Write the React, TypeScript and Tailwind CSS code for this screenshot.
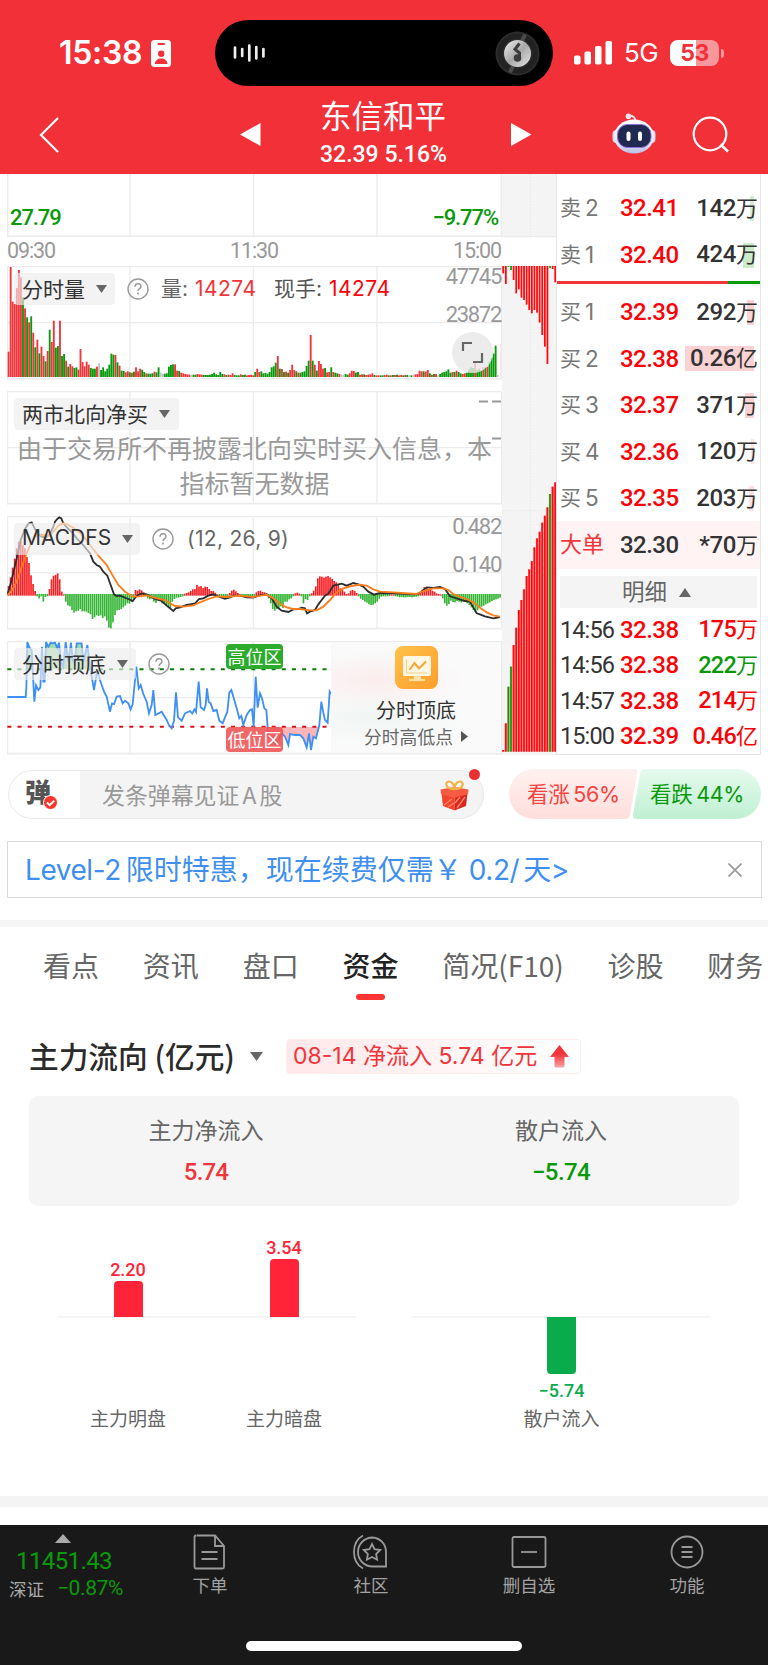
import type { ReactNode } from "react";
import clsx from "clsx";

interface Level {
  label: string;
  price: string;
  amount: string;
  depth?: string;
}

interface Tick {
  time: string;
  price: string;
  amount: string;
  up: boolean;
}

const SELLS: Level[] = [
  { label: "卖2", price: "32.41", amount: "142万", depth: "w-1 bg-[#d3efd3]" },
  { label: "卖1", price: "32.40", amount: "424万", depth: "w-[11px] bg-[#cbebcb]" },
];

const BUYS: Level[] = [
  { label: "买1", price: "32.39", amount: "292万", depth: "w-[7px] bg-[#fbd3d5]" },
  { label: "买2", price: "32.38", amount: "0.26亿", depth: "w-[69px] bg-[#fbd3d5]" },
  { label: "买3", price: "32.37", amount: "371万", depth: "w-[9px] bg-[#fbd3d5]" },
  { label: "买4", price: "32.36", amount: "120万", depth: "w-[3px] bg-[#fde3e4]" },
  { label: "买5", price: "32.35", amount: "203万", depth: "w-[5px] bg-[#fde0e1]" },
];

const TICKS: Tick[] = [
  { time: "14:56", price: "32.38", amount: "175万", up: true },
  { time: "14:56", price: "32.38", amount: "222万", up: false },
  { time: "14:57", price: "32.38", amount: "214万", up: true },
  { time: "15:00", price: "32.39", amount: "0.46亿", up: true },
];

const TABS = ["看点", "资讯", "盘口", "资金", "简况(F10)", "诊股", "财务"];

// one entry per minute: r = up, g = down, x = flat
const VOLUME =
  "r76 r330 r226 r219 r267 r321 r299 g239 r206 g179 r164 g182 r133 g89 r112 g71 r91 r63 g47 r78 g142 r105 r169 g88 g93 r169 g63 g69 r49 g31 r39 r32 g27 g29 r22 r84 r45 r32 r46 r37 g27 g25 g25 r31 x41 g21 g29 g17 g25 g37 g70 g67 r66 g44 r34 g19 g18 r14 r17 g14 r13 g16 r29 r17 r25 g22 g15 r11 g10 g10 g11 r16 g14 g29 x13 x10 g10 g11 g31 g36 g38 r38 r19 g18 r13 r11 r9 r8 r7 x7 g7 g7 r9 r8 r7 g6 g6 g6 g7 g9 g13 g8 g6 g15 g9 r8 g6 r7 r6 r11 g6 g5 g5 r8 g6 g7 r5 r6 r7 r5 g15 r25 r15 g17 g11 g12 g10 g15 g29 g32 g43 r63 g25 r24 g15 r16 g13 r21 r37 r21 g17 r13 g13 g15 g17 g33 g49 r126 g49 r37 g19 r48 r39 r25 g27 r14 r15 g29 r15 g13 g11 r9 x7 x7 g9 g7 r11 r19 r18 g13 g15 r7 r8 g8 r6 r7 r8 r11 g6 r5 r5 g5 g5 r6 r7 g5 r5 g6 r6 g7 r5 r6 g5 r6 g6 x5 g5 x7 r8 r9 r19 r17 g17 r16 r21 g11 r7 g9 r9 x5 g9 g13 g15 g17 g23 g13 r15 g15 r19 g15 g11 r9 r11 g13 g23 g29 g27 r44 g21 g25 g19 r29 g29 r31 g46 g57 g70 g94 x6 x0 r99";

// histogram edges, measured against a zero line at 630
const MACD_HIST = [
  603, 577, 548, 521, 490, 470, 468, 480, 490, 516, 534, 571, 597, 618, 634, 640, 634, 650, 636, 634, 612, 583, 572,
  570, 565, 583, 620, 628, 650, 661, 664, 675, 683, 679, 677, 672, 679, 679, 680, 684, 688, 702, 697, 691, 693, 691,
  699, 694, 707, 728, 730, 712, 690, 676, 675, 672, 667, 662, 655, 656, 650, 640, 615, 617, 613, 616, 622, 634, 640,
  643, 640, 650, 654, 645, 648, 655, 657, 660, 666, 670, 650, 642, 638, 638, 636, 634, 626, 624, 622, 618, 613, 612,
  600, 605, 603, 609, 605, 606, 612, 618, 618, 623, 628, 634, 637, 638, 640, 638, 624, 617, 614, 619, 624, 628, 634,
  634, 636, 636, 636, 635, 634, 622, 618, 617, 621, 622, 626, 640, 655, 672, 677, 672, 668, 664, 669, 650, 650, 643,
  640, 634, 625, 623, 626, 634, 655, 642, 645, 634, 625, 617, 604, 580, 574, 575, 578, 575, 573, 577, 582, 588, 592,
  600, 610, 613, 620, 627, 625, 617, 615, 618, 624, 634, 641, 645, 650, 653, 658, 660, 659, 655, 650, 641, 635, 634,
  634, 634, 633, 628, 628, 634, 635, 637, 636, 637, 637, 636, 636, 637, 636, 635, 634, 622, 614, 606, 610, 613, 612,
  617, 620, 625, 627, 628, 640, 655, 662, 657, 647, 651, 652, 648, 650, 652, 650, 650, 655, 660, 667, 675, 682, 676,
  668, 665, 662, 658, 655, 652, 648, 645, 643, 641, 638,
];

const DIF =
  "22,630 35,585 50,520 62,465 75,432 85,416 95,412 105,432 115,447 125,455 137,458 150,447 160,425 165,410 172,402 178,397 184,400 190,415 205,432 215,440 230,460 245,475 262,495 270,505 280,530 290,540 300,545 310,560 322,572 332,600 342,628 350,633 360,632 385,642 398,648 410,632 425,625 440,628 455,637 470,643 485,648 500,662 520,678 527,670 540,667 560,660 570,658 585,655 597,642 610,640 625,632 640,628 655,634 675,641 690,637 700,632 720,632 740,637 760,638 775,632 800,628 815,640 830,665 845,677 865,681 880,673 895,672 905,668 915,670 921,685 930,680 945,675 955,658 965,645 975,632 985,626 1000,602 1025,596 1040,602 1060,594 1075,598 1090,605 1105,620 1122,629 1140,624 1180,625 1250,628 1262,622 1280,607 1300,609 1320,606 1335,612 1350,634 1370,640 1395,648 1410,650 1420,668 1430,685 1440,688 1455,694 1480,700 1500,696";

const DEA =
  "22,630 35,618 50,590 65,545 80,505 95,470 110,450 125,449 145,452 160,440 175,422 190,415 205,420 220,428 245,448 270,480 295,512 320,540 340,575 355,600 375,620 400,635 420,634 440,631 460,637 480,642 495,645 510,655 525,663 550,665 580,661 600,652 625,642 650,634 680,636 720,632 760,636 800,629 820,640 840,657 860,667 880,672 900,672 930,676 950,676 970,665 990,645 1010,622 1030,610 1055,603 1080,599 1100,602 1120,613 1140,620 1180,622 1250,627 1270,618 1300,610 1330,610 1345,615 1360,627 1380,635 1400,642 1420,652 1440,668 1460,682 1480,691 1500,695";

const PEAKS =
  "22,201 77,201 79,175 82,36 88,52 95,60 103,215 108,166 115,180 121,172 126,50 130,155 134,155 138,36 145,50 152,38 158,40 165,38 172,55 177,38 183,95 190,110 197,36 205,95 213,38 218,90 224,100 230,40 245,40 250,95 262,45 272,120 282,180 292,120 300,150 305,165 312,185 320,200 330,245 336,220 342,222 350,200 360,198 368,220 375,212 385,220 392,238 398,222 409,110 416,175 422,165 430,192 440,215 447,250 455,225 460,180 466,255 485,245 500,270 508,288 515,295 522,272 528,187 534,262 545,272 555,250 570,243 577,250 583,238 588,246 596,155 602,232 612,240 617,225 621,175 626,215 632,220 640,243 650,240 658,272 668,280 675,262 682,245 688,188 694,180 700,200 710,235 718,265 724,258 730,285 740,255 750,240 756,238 761,290 767,140 773,233 780,190 786,205 793,235 799,240 805,320 815,325 825,343 835,330 845,310 855,320 865,345 870,312 885,315 900,315 910,325 920,352 927,310 933,360 940,320 948,325 958,285 964,215 970,248 975,270 983,278 989,185 993,192";

const ASK_DEPTH = "r22 r54 g3 g12 r42 r82 r70 r95 r102 r116 r132 r142 r132 r140 r170 r207 r242 r294 g6 r9 r49";
const BID_DEPTH =
  "r5 r85 g195 g255 r320 r372 r425 r455 r487 r527 r547 r572 r613 r640 r660 r687 r708 r733 g773 r795 r808";

const fillOf = (code: string) =>
  code.startsWith("r") ? "#f0353b" : code.startsWith("g") ? "#089a0b" : "#bfc3c3";

const Grid = ({ top, children }: { top: number; children?: ReactNode }) => (
  <svg className="block h-[114px] w-[495px]" viewBox={`21 ${top} 1485 342`}>
    <g stroke="#ececec" strokeWidth="4">
      <path d={`M390 ${top}v340M760 ${top}v340M1131 ${top}v340M21 ${top + 170}h1485`} />
      <path d={`M22.5 ${top}v340`} />
      <path d={`M21 ${top + 1.5}h1485M21 ${top + 338}h1485`} strokeWidth="5" />
    </g>
    {children}
    <path d={`M1504.5 ${top}v340`} stroke="#ececec" strokeWidth="3" />
  </svg>
);

const Picker = ({ label, className }: { label: string; className?: string }) => (
  <button
    type="button"
    className={clsx(
      "absolute top-[7px] left-[7px] flex h-8 items-center rounded bg-[#ececec]/65 pl-2 text-[21px] leading-[30px] whitespace-nowrap text-[#333]",
      className,
    )}
  >
    <span className="-translate-y-px">{label}</span>
    <svg className="ml-[11px] h-2 w-[11px]" viewBox="0 0 11 8">
      <path d="M0 0h11L5.500 8z" fill="#666" />
    </svg>
  </button>
);

const Help = ({ className }: { className: string }) => (
  <svg className={clsx("absolute h-[22px] w-[22px]", className)} viewBox="0 0 22 22" fill="none" stroke="#999">
    <circle cx="11" cy="11" r="10" strokeWidth="1.400" />
    <path d="M8 8.800c0-4 6-4 6-.4 0 2.200-3 2.200-3 4.600" strokeWidth="1.500" />
    <path d="M11 14.600v1.800" strokeWidth="1.700" />
  </svg>
);

const StatusBar = () => (
  <div className="flex h-[106px] items-start pt-5">
    <div className="ml-[59px] flex w-[156px] items-center pt-[13px]">
      <span className="font-['Inter',sans-serif] text-[32px] leading-[40px] font-semibold tracking-[-0.3px]">15:38</span>
      <svg className="ml-[9px] h-[27px] w-5" viewBox="0 0 20 27">
        <rect width="20" height="27" rx="3.500" fill="#fff" />
        <rect x="6.500" y="3" width="7.500" height="2" rx="1" fill="#f23038" />
        <circle cx="10.200" cy="13.800" r="3.200" fill="#f23038" />
        <path d="M3.800 24c0-7.500 12.700-7.500 12.700 0z" fill="#f23038" />
      </svg>
    </div>
    <div className="flex h-[66px] w-[338px] items-center justify-between rounded-full bg-black pr-[13px] pl-[18px]">
      <svg className="h-[18px] w-[33px]" viewBox="0 0 33 18" stroke="#eee" strokeWidth="2.700" strokeLinecap="round">
        <path d="M2 3.500v10M9.200 5v7M16.300 1.500v15M23.300 3v11.500M30.400 5v7.500" />
      </svg>
      <svg className="h-[45px] w-[45px]" viewBox="0 0 45 45">
        <defs>
          <linearGradient id="metal" x1="0" y1="0" x2="1" y2="1">
            <stop offset="0" stopColor="#f2f2f2" />
            <stop offset=".5" stopColor="#a8a8a8" />
            <stop offset="1" stopColor="#e8e8e8" />
          </linearGradient>
        </defs>
        <circle cx="22.500" cy="22.500" r="22" fill="#2c2c2c" />
        <circle cx="22.500" cy="22.500" r="17.500" fill="none" stroke="#222" strokeWidth="5" />
        <path d="M30 3.500l-3 6.500M15 41.500l3-6.500" stroke="#4a4a4a" strokeWidth="4" />
        <circle cx="22.500" cy="22.500" r="13.500" fill="url(#metal)" />
        <circle cx="22.500" cy="27" r="3.800" fill="#3c3c3c" />
        <path d="M24.500 27v-5l-4.500-3.800 4.500-5.700" fill="none" stroke="#3c3c3c" strokeWidth="3" />
      </svg>
    </div>
    <div className="flex items-center pt-[18px] pl-[21px]">
      <svg className="h-6 w-[38px]" viewBox="0 0 38 24" fill="#fff">
        <rect y="14.500" width="6.500" height="9" rx="1.800" />
        <rect x="10.500" y="10.500" width="6.500" height="13" rx="1.800" />
        <rect x="21" y="5" width="6.500" height="18.500" rx="1.800" />
        <rect x="31.500" width="6.500" height="23.500" rx="1.800" />
      </svg>
      <span className="ml-3 w-[46px] font-['Inter',sans-serif] text-[26px] leading-[30px] tracking-[-0.6px]">5G</span>
      <div className="flex h-[26px] w-[49px] items-center justify-center rounded-lg bg-linear-to-r from-white from-53% to-white/50 to-53% font-['Inter',sans-serif] text-[23px] leading-[26px] font-bold tracking-[-0.6px] text-[#f23038]">
        53
      </div>
      <div className="ml-[1.500px] h-[9px] w-[3px] rounded-r-full bg-white/50" />
    </div>
  </div>
);

const Robot = () => (
  <svg className="h-[41px] w-11" viewBox="0 0 44 41">
    <defs>
      <linearGradient id="shell" x1="0" y1="0" x2="0" y2="1">
        <stop offset="0" stopColor="#fff" />
        <stop offset=".7" stopColor="#e3e4f3" />
        <stop offset="1" stopColor="#b9bde6" />
      </linearGradient>
    </defs>
    <circle cx="16.500" cy="3.300" r="2.800" fill="#f4e9f2" />
    <path d="M17 3c4-.5 6 1 6.500 5" fill="none" stroke="#f0e5ee" strokeWidth="1.800" />
    <rect x=".5" y="17" width="8" height="13" rx="4" fill="#d9d9ef" />
    <rect x="35.500" y="17" width="8" height="13" rx="4" fill="#d9d9ef" />
    <ellipse cx="22" cy="23.500" rx="20" ry="17" fill="url(#shell)" />
    <rect x="5.500" y="11.500" width="33.500" height="23" rx="10" fill="#202a50" stroke="#8b6fe0" strokeWidth="1" />
    <rect x="14.500" y="18.500" width="4" height="9.500" rx="2" fill="#fff" />
    <rect x="26" y="18.500" width="4" height="9.500" rx="2" fill="#fff" />
  </svg>
);

const NavBar = () => (
  <div className="flex h-[68px] items-center">
    <svg className="ml-[39px] h-9 w-5 -translate-y-[5px]" viewBox="0 0 20 36" fill="none" stroke="#fff" strokeWidth="2.200">
      <path d="M19 1L2 18l17 17" />
    </svg>
    <svg className="ml-[181px] h-[23px] w-[21px] -translate-y-[6px]" viewBox="0 0 21 23" fill="#fff">
      <path d="M0 11.500L20.500 0v23z" />
    </svg>
    <div className="ml-[59px] w-[128px] -translate-y-[7px] whitespace-nowrap">
      <div className="-translate-y-[2px] text-[31.500px] leading-[38px]">东信和平</div>
      <div className="mt-1 translate-y-px font-['Roboto',sans-serif] text-[23px] leading-[30px] font-medium tracking-[0px]">
        32.39 5.16%
      </div>
    </div>
    <svg className="ml-[63px] h-[23px] w-[21px] -translate-y-[6px]" viewBox="0 0 21 23" fill="#fff">
      <path d="M20.500 11.500L0 0v23z" />
    </svg>
    <div className="ml-20 -translate-y-[7px]">
      <Robot />
    </div>
    <svg className="ml-9 h-[37px] w-[37px] -translate-y-[6px]" viewBox="0 0 37 37" fill="none" stroke="#fff" strokeWidth="2.200">
      <circle cx="18" cy="18" r="16.300" />
      <path d="M28.500 28.500l7.500 7" strokeWidth="2.600" />
    </svg>
  </div>
);

const VolumePanel = () => (
  <div className="relative">
    <Grid top={288}>
      {VOLUME.split(" ").map((code, i) => {
        const h = Number(code.slice(1));
        return <rect key={i} x={23 + i * 6.165} y={621 - h} width="5.600" height={h} fill={fillOf(code)} />;
      })}
    </Grid>
    <Picker label="分时量" className="w-[101px]" />
    <Help className="top-[12px] left-[120px]" />
    <div className="absolute top-[7px] left-[154px] flex items-center font-['Inter','Noto_Sans_CJK_SC',sans-serif] text-[21px] leading-8 whitespace-nowrap text-[#666]">
      <span className="w-[34px]">量:</span>
      <span className="w-[79px] tracking-[0.45px] text-[#f0353b]">14274</span>
      <span className="w-[55px] text-[#555]">现手:</span>
      <span className="tracking-[0.45px] text-[#fb0207]">14274</span>
    </div>
    <div className="absolute top-[-3px] right-px text-right font-['Roboto',sans-serif] text-[22px] leading-[28px] tracking-[-1.3px] text-[#999]">
      <div>47745</div>
      <div className="mt-[10px]">23872</div>
    </div>
    <svg className="absolute top-[66px] left-[445px] h-[41px] w-[41px]" viewBox="0 0 41 41" fill="none">
      <circle cx="20.500" cy="20.500" r="20.500" fill="#e8e8e8" fillOpacity=".82" />
      <path d="M11 19v-8h9M30 21v9h-9" stroke="#666" strokeWidth="2.200" />
    </svg>
  </div>
);

const NorthPanel = () => (
  <div className="relative mt-[11px]">
    <Grid top={0} />
    <Picker label="两市北向净买" className="w-[165px]" />
    <div className="absolute top-[39px] left-0 w-[495px] text-center text-[25px] leading-[35px] text-[#999]">
      由于交易所不再披露北向实时买入信息，本
      <br />
      指标暂无数据
    </div>
    <svg className="absolute top-[9px] right-0 h-10 w-6" viewBox="0 0 24 40" stroke="#999" strokeWidth="1.800">
      <path d="M1 1.500h9M14 1.500h9M14 38.500h9" />
    </svg>
  </div>
);

const MacdPanel = () => (
  <div className="relative mt-[11px]">
    <Grid top={393}>
      {MACD_HIST.map((edge, i) => (
        <rect
          key={i}
          x={23 + i * 6.145}
          y={edge < 630 ? edge : 627}
          width="5"
          height={edge < 630 ? 632 - edge : edge - 627}
          fill={edge < 630 ? "#fb1d22" : "#35b535"}
        />
      ))}
      <polyline points={DIF} fill="none" stroke="#2d2d2d" strokeWidth="5.500" />
      <polyline points={DEA} fill="none" stroke="#fb7d1c" strokeWidth="5.500" />
    </Grid>
    <Picker label="MACDFS" className="w-[126px] font-['Inter',sans-serif]" />
    <Help className="top-[12px] left-[145px]" />
    <span className="absolute top-[7px] left-[180px] font-['Inter',sans-serif] text-[21px] leading-8 tracking-[0.3px] text-[#666]">
      (12, 26, 9)
    </span>
    <div className="absolute top-[-3px] right-px text-right font-['Roboto',sans-serif] text-[22px] leading-[28px] tracking-[-1.3px] text-[#999]">
      <div>0.482</div>
      <div className="mt-[10px]">0.140</div>
    </div>
  </div>
);

const PeakPanel = () => (
  <div className="relative mt-[11px]">
    <Grid top={33}>
      <defs>
        <clipPath id="above">
          <rect x="21" y="33" width="1000" height="85" />
        </clipPath>
        <clipPath id="below">
          <rect x="21" y="290" width="1000" height="90" />
        </clipPath>
      </defs>
      <polygon points={`22,118 ${PEAKS} 993,118`} fill="#a5dba5" clipPath="url(#above)" />
      <polygon points={`22,290 ${PEAKS} 993,290`} fill="#fbb5b8" clipPath="url(#below)" />
      <path d="M22 118H993" stroke="#0c7d0c" strokeWidth="6" strokeDasharray="12 18.500" />
      <path d="M22 290H993" stroke="#d3141a" strokeWidth="6" strokeDasharray="12 18.500" />
      <polyline points={PEAKS} fill="none" stroke="#3f90f5" strokeWidth="5.500" />
    </Grid>
    <Picker label="分时顶底" className="w-[122px]" />
    <Help className="top-[12px] left-[141px]" />
    <span className="absolute top-[3px] left-[219px] h-[25px] w-[57px] rounded bg-[#2cab2c] text-center text-[18px] leading-[25px] text-white">
      高位区
    </span>
    <span className="absolute top-[86px] left-[219px] h-[25px] w-[57px] rounded bg-[#ef5757]/90 text-center text-[18px] leading-[24px] text-white">
      低位区
    </span>
    <div className="absolute top-px left-[324px] h-[111px] w-[170px] bg-[#fafafa]">
      <div className="flex h-full flex-col items-center bg-[radial-gradient(ellipse_90px_28px_at_45px_38px,#fbecec,transparent),radial-gradient(ellipse_110px_28px_at_40px_75px,#f0f6f4,transparent)]">
        <svg className="mt-1 h-[43px] w-[43px]" viewBox="0 0 43 43">
          <defs>
            <linearGradient id="gold" x1="0" y1="0" x2="1" y2="1">
              <stop offset="0" stopColor="#ffc24a" />
              <stop offset="1" stopColor="#fd9d2b" />
            </linearGradient>
          </defs>
          <rect width="43" height="43" rx="8" fill="url(#gold)" />
          <rect x="8" y="10" width="28" height="20" rx="1.500" fill="#fff6e3" />
          <path d="M19 30h7v3h4v2H14v-2h5z" fill="#ffe2a8" />
          <path d="M11.500 13.500v13.500h21" fill="none" stroke="#f9cf84" strokeWidth="1" />
          <path d="M14.500 24l5-7 4.500 5.500 7-7" fill="none" stroke="#f5a63a" strokeWidth="2" />
        </svg>
        <div className="mt-2 text-[20px] leading-[26px] text-[#333]">分时顶底</div>
        <div className="mt-px flex items-center text-[17.800px] leading-[24px] text-[#666]">
          分时高低点
          <svg className="ml-2 h-[11px] w-[7px]" viewBox="0 0 7 11">
            <path d="M0 0l7 5.500L0 11z" fill="#555" />
          </svg>
        </div>
      </div>
    </div>
  </div>
);

const ChartColumn = () => (
  <div className="w-[495px] font-['Noto_Sans_CJK_SC',sans-serif]">
    <div className="relative h-[63px]">
      <svg className="block h-[63px] w-[495px]" viewBox="0 0 495 63" stroke="#ececec" strokeWidth="1.400">
        <path d="M.7 0v63M123 0v63M246.500 0v63M370 0v63M494.300 0v63M0 62.300h495" />
      </svg>
      <span className="absolute bottom-[5px] left-[3px] font-['Roboto',sans-serif] text-[22px] leading-[28px] font-medium tracking-[-1.100px] text-[#0a990a]">
        27.79
      </span>
      <span className="absolute right-1 bottom-[5px] font-['Roboto',sans-serif] text-[22px] leading-[28px] font-medium tracking-[-1.100px] text-[#0a990a]">
        −9.77%
      </span>
    </div>
    <div className="flex h-[29px] items-center justify-between pr-px font-['Roboto',sans-serif] text-[21.500px] leading-[29px] tracking-[-1.100px] text-[#999]">
      <span className="-translate-y-px">09:30</span>
      <span className="-translate-y-px">11:30</span>
      <span className="-translate-y-px">15:00</span>
    </div>
    <VolumePanel />
    <NorthPanel />
    <MacdPanel />
    <PeakPanel />
  </div>
);

const DepthColumn = () => (
  <svg className="block h-[581px] w-[54px]" viewBox="0 0 162 1743">
    <rect width="162" height="188" fill="#f4f4f4" />
    <rect y="276" width="162" height="1467" fill="#f4f4f4" />
    <path d="M0 188h162" stroke="#ececec" strokeWidth="4" />
    <path d="M85 0v188M85 276v1100M0 1010h162" fill="none" stroke="#e6e6e6" strokeWidth="3" strokeDasharray="4 5" />
    {ASK_DEPTH.split(" ").map((code, i) => (
      <rect
        key={i}
        x={1 + i * 7.800}
        y="276"
        width="5.400"
        height={Number(code.slice(1))}
        fill={code.startsWith("r") ? "#fb0a0e" : "#0a9f0a"}
      />
    ))}
    {BID_DEPTH.split(" ").map((code, i) => (
      <g key={i}>
        <rect x={i * 7.800} y={1733 - Number(code.slice(1))} width="7.800" height={code.slice(1)} fill="#ff9b9b" />
        <rect
          x={1 + i * 7.800}
          y={1733 - Number(code.slice(1))}
          width="5.200"
          height={code.slice(1)}
          fill={code.startsWith("r") ? "#fb0a0e" : "#0a9f0a"}
        />
      </g>
    ))}
  </svg>
);

const LevelRow = ({ label, price, amount, depth }: Level) => (
  <div className="relative flex h-[46.900px] items-center pr-[2px] pl-[3px]">
    {depth && <span className={clsx("absolute top-[11px] right-[6px] h-[25px]", depth)} />}
    <span className="flex w-[60px] gap-1 text-[21px] text-[#777]">
      <span>{label.charAt(0)}</span>
      <span className="font-['Inter',sans-serif] text-[22.500px]">{label.charAt(1)}</span>
    </span>
    <span className="text-[24px] font-medium tracking-[-0.55px] text-[#fb0207]">{price}</span>
    <span className="relative ml-auto text-[24px] font-medium tracking-[-0.4px] text-[#333]">
      {amount.slice(0, -1)}
      <span className="text-[22px] font-normal tracking-normal">{amount.slice(-1)}</span>
    </span>
  </div>
);

const OrderBook = () => (
  <div className="flex w-[205px] flex-col border-x border-b border-[#e6e6e6] pt-[11px] font-['Roboto','Noto_Sans_CJK_SC',sans-serif] leading-[32px] whitespace-nowrap">
    {SELLS.map((level) => (
      <LevelRow key={level.label} {...level} />
    ))}
    <div className="mt-[3px] mb-[5px] flex h-[3px]">
      <div className="w-[171px] bg-[#f0353b]" />
      <div className="flex-1 bg-[#0a990a]" />
    </div>
    {BUYS.map((level) => (
      <LevelRow key={level.label} {...level} />
    ))}
    <div className="flex h-[48px] items-center bg-[#fff3f4] pr-[2px] pl-[3px]">
      <span className="w-[60px] text-[22px] text-[#f0353b]">大单</span>
      <span className="text-[24px] font-medium tracking-[-0.55px] text-[#333]">32.30</span>
      <span className="ml-auto text-[24px] font-medium tracking-[-0.4px] text-[#333]">
        *70<span className="text-[22px] font-normal tracking-normal">万</span>
      </span>
    </div>
    <div className="mx-[3px] mt-[7px] mb-1 flex h-8 items-center justify-center gap-3 bg-[#f4f4f4] pr-1 text-[22.500px] text-[#666]">
      明细
      <svg className="h-[9px] w-3" viewBox="0 0 12 9">
        <path d="M6 0l6 9H0z" fill="#666" />
      </svg>
    </div>
    {TICKS.map((tick, i) => (
      <div key={i} className="flex h-[35.800px] items-center pr-[2px] pl-[3px]">
        <span className="w-[60px] text-[23.500px] tracking-[-0.9px] text-[#333]">{tick.time}</span>
        <span className="text-[24px] font-medium tracking-[-0.55px] text-[#fb0207]">{tick.price}</span>
        <span
          className={clsx(
            "ml-auto text-[23.500px] font-medium tracking-[-0.8px]",
            tick.up ? "text-[#fb0207]" : "text-[#0a990a]",
          )}
        >
          {tick.amount.slice(0, -1)}
          <span className="text-[22px] font-normal tracking-normal">{tick.amount.slice(-1)}</span>
        </span>
      </div>
    ))}
  </div>
);

const Gift = () => (
  <svg className="h-[31px] w-[29px]" viewBox="0 0 29 31">
    <path d="M1.500 13.500L14.500 17v13.500L3 26z" fill="#f2432f" />
    <path d="M14.500 17l13-3.500L26 26l-11.500 4.500z" fill="#d9271f" />
    <path d="M.5 9.500L14.500 7l14 2.500-.5 4.500-13.500 4L1 14z" fill="#f55a42" />
    <path d="M4 25l8-6M8 27l6-4M17 28l8-11M15 23l5-6" stroke="#ff8a66" strokeWidth="1.300" />
    <path d="M14.500 9C5 9.500 4.500 1.500 9 1.500c3.500 0 5.500 4 5.500 7.500 0-3.500 2-7.500 5.500-7.500 4.500 0 4 8-5.500 7.500z" fill="none" stroke="#f0b444" strokeWidth="2.200" />
  </svg>
);

const DanmuBar = () => (
  <div className="mt-[14px] ml-2 flex h-[50px] items-center font-['Noto_Sans_CJK_SC',sans-serif]">
    <div className="relative flex h-[49px] w-[476px] items-center rounded-full border border-[#e8e8e8] bg-linear-to-r from-white from-[71px] to-[#f4f4f4] to-[71px]">
      <span className="ml-4 -translate-y-[3px] text-[26px] leading-[30px] font-black text-[#555]">弹</span>
      <svg className="absolute top-[24px] left-[34px] h-[15px] w-[15px]" viewBox="0 0 15 15">
        <circle cx="7.500" cy="7.500" r="7" fill="#f8352d" stroke="#fff" />
        <path d="M4 7.500l2.700 2.700 4.600-4.600" fill="none" stroke="#fff" strokeWidth="1.900" />
      </svg>
      <span className="ml-[51px] text-[22.900px] leading-[30px] [word-spacing:-2px] text-[#999]">发条弹幕见证 A 股</span>
      <div className="absolute top-[9px] right-[14px]">
        <Gift />
      </div>
      <span className="absolute top-[-2px] right-[3px] h-[11px] w-[11px] rounded-full bg-[#e93030]" />
    </div>
    <div className="relative ml-[25px] flex h-[50px] w-[252px] items-center font-['Inter','Noto_Sans_CJK_SC',sans-serif] text-[21.500px] [word-spacing:-2px] whitespace-nowrap">
      <svg className="absolute inset-0 h-[50px] w-[252px]" viewBox="0 0 252 50">
        <defs>
          <linearGradient id="bull" x1="0" y1="0" x2="0" y2="1">
            <stop offset="0" stopColor="#fff1f0" />
            <stop offset="1" stopColor="#ffdedc" />
          </linearGradient>
          <linearGradient id="bear" x1="0" y1="0" x2="0" y2="1">
            <stop offset="0" stopColor="#e6faee" />
            <stop offset="1" stopColor="#bff0d3" />
          </linearGradient>
        </defs>
        <path d="M25 0h101q3 0 2.400 3l-7.400 43q-.8 4-5 4H25a25 25 0 0 1 0-50z" fill="url(#bull)" />
        <path d="M136 0h91a25 25 0 0 1 0 50h-99q-4.500 0-4-4l7-41q.8-5 5-5z" fill="url(#bear)" />
      </svg>
      <span className="relative ml-[18px] w-[123px] tracking-[-0.3px] text-[#f5433f]">看涨 56%</span>
      <span className="relative tracking-[-0.3px] text-[#0a990a]">看跌 44%</span>
    </div>
  </div>
);

const FlowBar = ({ value, label, height, top }: { value: string; label: string; height: string; top: string }) => (
  <div className={clsx("flex h-[196px] w-[100px] flex-col items-center", top)}>
    <span className="font-['Roboto',sans-serif] text-[18px] leading-[22px] font-medium text-[#ff2437]">{value}</span>
    <div className={clsx("w-[29px] rounded-t bg-[#ff2437]", height)} />
    <span className="mt-[88px] text-[19px] leading-[26px] text-[#666]">{label}</span>
  </div>
);

const FundFlow = () => (
  <section className="h-[495px] pt-[38px]">
    <div className="flex h-[35px] items-center pl-[29px]">
      <h2 className="w-[207px] -translate-y-px text-[29.700px] leading-[35px] font-medium whitespace-nowrap text-[#2b2b2b]">
        主力流向 (亿元)
      </h2>
      <svg className="ml-[14px] h-[9px] w-[13px]" viewBox="0 0 13 9">
        <path d="M0 0h13L6.500 9z" fill="#666" />
      </svg>
      <div className="ml-[23px] flex h-[35px] w-[295px] items-center rounded-sm border border-[#ffeced] bg-linear-to-r from-[#ffe8e9] to-white pl-[6px] font-['Inter','Noto_Sans_CJK_SC',sans-serif] text-[23px] leading-[33px] whitespace-nowrap text-[#f0353b]">
        08-14 净流入 5.74 亿元
        <svg className="mr-[11px] ml-auto h-[23px] w-[19px]" viewBox="0 0 19 23">
          <defs>
            <linearGradient id="arrow" x1="0" y1="0" x2="0" y2="1">
              <stop offset=".4" stopColor="#ef3339" />
              <stop offset="1" stopColor="#f9a5a8" />
            </linearGradient>
          </defs>
          <path d="M9.500 0L19 12h-4.500v9q0 1.500-1.500 1.500H6q-1.500 0-1.500-1.500v-9H0z" fill="url(#arrow)" />
        </svg>
      </div>
    </div>
    <div className="mx-[29px] mt-[22px] flex h-[110px] rounded-[9px] bg-[#f5f5f5] text-center">
      <div className="w-[354px] pt-[18px]">
        <div className="text-[23px] leading-[30px] text-[#666]">主力净流入</div>
        <div className="mt-[13px] font-['Roboto',sans-serif] text-[24px] leading-[30px] font-medium tracking-[-0.8px] text-[#f0353b]">
          5.74
        </div>
      </div>
      <div className="w-[356px] pt-[18px]">
        <div className="text-[23px] leading-[30px] text-[#666]">散户流入</div>
        <div className="mt-[13px] font-['Roboto',sans-serif] text-[24px] leading-[30px] font-medium tracking-[-0.6px] text-[#0a990a]">
          −5.74
        </div>
      </div>
    </div>
    <div className="mt-[31px] flex h-[196px] justify-between px-[57px]">
      <div className="flex w-[299px] justify-between bg-linear-to-b from-[#f4f4f4] to-[#f4f4f4] bg-[size:100%_2px] bg-[position:0_79px] bg-no-repeat pr-[22px] pl-[21px]">
        <FlowBar value="2.20" label="主力明盘" top="pt-[22px]" height="h-9" />
        <FlowBar value="3.54" label="主力暗盘" top="pt-0" height="h-[58px]" />
      </div>
      <div className="flex w-[299px] flex-col items-center bg-linear-to-b from-[#f4f4f4] to-[#f4f4f4] bg-[size:100%_2px] bg-[position:0_79px] bg-no-repeat pt-[80px]">
        <div className="h-[57px] w-[29px] rounded-b bg-[#0aab4d]" />
        <span className="mt-[6px] font-['Roboto',sans-serif] text-[18px] leading-[22px] font-medium text-[#0aab4d]">−5.74</span>
        <span className="mt-[3px] text-[19px] leading-[26px] text-[#666]">散户流入</span>
      </div>
    </div>
  </section>
);

const DockItem = ({ label, className, children }: { label: string; className?: string; children: ReactNode }) => (
  <div className={clsx("flex w-20 flex-col items-center", className)}>
    <svg className="h-9 w-9" viewBox="0 0 36 36" fill="none" stroke="#999" strokeWidth="1.800">
      {children}
    </svg>
    <span className="mt-[2px] text-[17.500px] leading-[26px] whitespace-nowrap text-[#a3a3a3]">{label}</span>
  </div>
);

const Dock = () => (
  <footer className="relative h-[140px] bg-[#191919]">
    <div className="flex pt-[9px]">
      <div className="w-[126px]">
        <svg className="ml-[55px] block h-[9px] w-4" viewBox="0 0 16 9">
          <path d="M8 0l8 9H0z" fill="#aaa" />
        </svg>
        <div className="mt-[3px] pl-4 font-['Roboto',sans-serif] text-[24px] leading-[30px] tracking-[-0.6px] text-[#0a9b0a]">
          11451.43
        </div>
        <div className="-mt-px flex items-center pl-[9px] text-[17.500px] leading-[27px] text-[#aaa]">
          <span className="w-12">深证</span>
          <span className="font-['Roboto',sans-serif] text-[21px] tracking-[-0.4px] whitespace-nowrap text-[#0a9b0a]">−0.87%</span>
        </div>
      </div>
      <div className="ml-11 flex w-[557px] justify-between">
        <DockItem label="下单">
          <path d="M4.500 1.500h18.500l9 10.500V33q0 1.500-1.500 1.500H4q-1.500 0-1.500-1.500V3q0-1.500 1.500-1.500M23 2v10h9M9.500 18h16M9.500 25h16" />
        </DockItem>
        <DockItem label="社区" className="translate-x-[2px]">
          <path d="M19.500 3.500A14.500 14.500 0 1 0 19.500 32.500H33V18A14 14.500 0 0 0 19.500 3.500z" />
          <path d="M10 1.500C-2 8-2 28 10 34.500" />
          <path d="M19 10l2.500 5.200 5.700.8-4.100 4 1 5.700-5.100-2.700-5.100 2.700 1-5.700-4.100-4 5.700-.8z" />
        </DockItem>
        <DockItem label="删自选" className="translate-x-px">
          <rect x="1.500" y="3" width="33" height="30" rx="1.500" />
          <path d="M10 18h16" />
        </DockItem>
        <DockItem label="功能">
          <circle cx="18" cy="18" r="15.500" />
          <path d="M12.500 13h11M12.500 18h11M12.500 23h11" />
        </DockItem>
      </div>
    </div>
    <div className="absolute bottom-[14px] left-[246px] h-[10px] w-[276px] rounded-full bg-white" />
  </footer>
);

const App = () => (
  <div className="h-[1665px] w-[768px] overflow-hidden bg-white font-['Noto_Sans_CJK_SC',sans-serif]">
    <header className="h-[174px] bg-[#f23038] text-white">
      <StatusBar />
      <NavBar />
    </header>

    <div className="flex h-[581px] pl-[7px]">
      <ChartColumn />
      <DepthColumn />
      <OrderBook />
    </div>

    <DanmuBar />

    <div className="mt-[22px] ml-[7px] flex h-[57px] w-[755px] items-center justify-between border border-[#dadada] pr-[19px] pl-[17px] font-['Inter','Noto_Sans_CJK_SC',sans-serif] text-[28px] whitespace-nowrap text-[#3f8ff0]">
      <span>
        <span className="mr-[5px] tracking-[-0.45px]">Level-2</span>
        <span>限时特惠，现在续费仅需￥ </span>
        <span className="-ml-px tracking-[-0.4px]">0.2/</span>
        <span className="ml-1 tracking-[-0.4px]">天&gt;</span>
      </span>
      <svg className="h-[14px] w-[14px]" viewBox="0 0 15 15" stroke="#999" strokeWidth="1.800">
        <path d="M.5.5l14 14M14.500.5l-14 14" />
      </svg>
    </div>

    <div className="mt-[22px] h-[7px] bg-[#f5f5f5]" />

    <nav className="flex h-[74px] gap-[43.800px] overflow-hidden pt-[18px] pl-[43px] text-[28px] leading-[40px] whitespace-nowrap text-[#666]">
      {TABS.map((tab) => (
        <div
          key={tab}
          className={clsx("flex shrink-0 flex-col items-center", tab === "资金" && "font-medium text-[#222]")}
        >
          {tab}
          {tab === "资金" && <span className="mt-[9px] h-[6px] w-[29px] rounded-full bg-[#fb3434]" />}
        </div>
      ))}
    </nav>

    <FundFlow />

    <div className="h-[11px] bg-[#f4f4f4]" />
    <div className="h-[18px]" />
    <Dock />
  </div>
);

export default App;
